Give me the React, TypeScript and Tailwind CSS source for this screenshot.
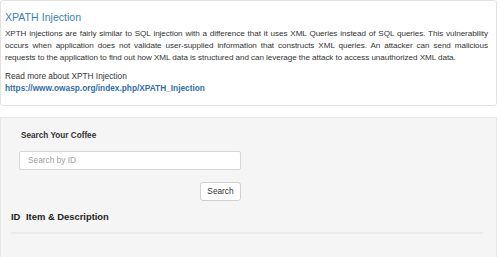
import React from "react";

export default function App() {
  return (
    <div className="w-[500px] h-[257px] overflow-hidden bg-white font-['Liberation_Sans',Arial,sans-serif] text-[#333]">
      <div className="w-[497px] h-[106px] border border-[#e2e2e2] rounded-[3px] pl-[4px] pr-[8px] pt-[9px]">
        <h3 className="text-[10.6px] leading-[14px] text-[#3d7fb8] m-0">XPATH Injection</h3>
        <p className="mt-[4px] text-[8.1px] tracking-[-0.06px] leading-[12px] text-justify">
          XPTH injections are fairly similar to SQL injection with a difference that it uses XML Queries instead of SQL queries. This vulnerability occurs when application does not validate user-supplied information that constructs XML queries. An attacker can send malicious requests to the application to find out how XML data is structured and can leverage the attack to access unauthorized XML data.
        </p>
        <p className="mt-[6px] text-[8.3px] leading-[12px]">Read more about XPTH Injection</p>
        <a className="block text-[8.3px] leading-[12px] font-bold text-[#2f6fa7]">https://www.owasp.org/index.php/XPATH_Injection</a>
      </div>
      <div className="mt-[11px] w-[497px] h-[150px] bg-[#f5f5f5] border border-[#e6e6e6] pt-[12px]">
        <div className="pl-[20px] text-[8.2px] leading-[12px] font-bold text-[#333]">Search Your Coffee</div>
        <div className="pl-[18px] mt-[9px] w-[240px]">
          <div className="h-[19px] w-[222px] bg-white border border-[#d6d6d6] rounded-[2px] flex items-center pl-[8px] text-[8.3px] text-[#a0a0a0]">
            Search by ID
          </div>
          <div className="flex justify-end mt-[12px] w-[222px]">
            <div className="h-[19px] w-[41px] bg-white border border-[#d0d0d0] rounded-[3px] flex items-center justify-center text-[8.3px] text-[#333]">
              Search
            </div>
          </div>
        </div>
        <div className="mt-[9px] ml-[10px] w-[472px]">
          <div className="flex text-[9.4px] font-bold leading-[14px] pb-[8px] border-b-2 border-[#ececec] text-[#222]">
            <span className="w-[15px]">ID</span>
            <span>Item &amp; Description</span>
          </div>
        </div>
      </div>
    </div>
  );
}
